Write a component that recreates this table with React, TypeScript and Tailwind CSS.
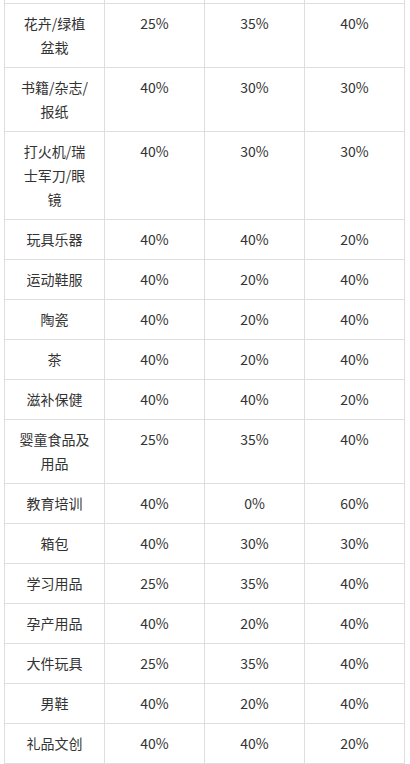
const rows: [string, string, string, string][] = [
  ["花卉/绿植盆栽", "25%", "35%", "40%"],
  ["书籍/杂志/报纸", "40%", "30%", "30%"],
  ["打火机/瑞士军刀/眼镜", "40%", "30%", "30%"],
  ["玩具乐器", "40%", "40%", "20%"],
  ["运动鞋服", "40%", "20%", "40%"],
  ["陶瓷", "40%", "20%", "40%"],
  ["茶", "40%", "20%", "40%"],
  ["滋补保健", "40%", "40%", "20%"],
  ["婴童食品及用品", "25%", "35%", "40%"],
  ["教育培训", "40%", "0%", "60%"],
  ["箱包", "40%", "30%", "30%"],
  ["学习用品", "25%", "35%", "40%"],
  ["孕产用品", "40%", "20%", "40%"],
  ["大件玩具", "25%", "35%", "40%"],
  ["男鞋", "40%", "20%", "40%"],
  ["礼品文创", "40%", "40%", "20%"],
];

export default function App() {
  return (
    <div
      className="h-[764px] w-[410px] overflow-hidden bg-white text-[14px] leading-[24px] text-[#333]"
      style={{ fontFamily: '"Noto Sans CJK SC", "Noto Sans", sans-serif' }}
    >
      <table className="ml-1 w-[401px] table-fixed border-collapse">
        <tbody>
          {/* tail of the row scrolled above */}
          <tr className="h-[3px]">
            {[0, 1, 2, 3].map((j) => (
              <td key={j} className="w-[100px] border-x border-[#dedede] p-0" />
            ))}
          </tr>
          {rows.map((r, i) => (
            <tr key={i}>
              {r.map((c, j) => (
                <td
                  key={j}
                  className="w-[100px] border border-[#dedede] px-[13px] pt-[7px] pb-[8px] text-center align-top break-all"
                >
                  {c}
                </td>
              ))}
            </tr>
          ))}
        </tbody>
      </table>
    </div>
  );
}
